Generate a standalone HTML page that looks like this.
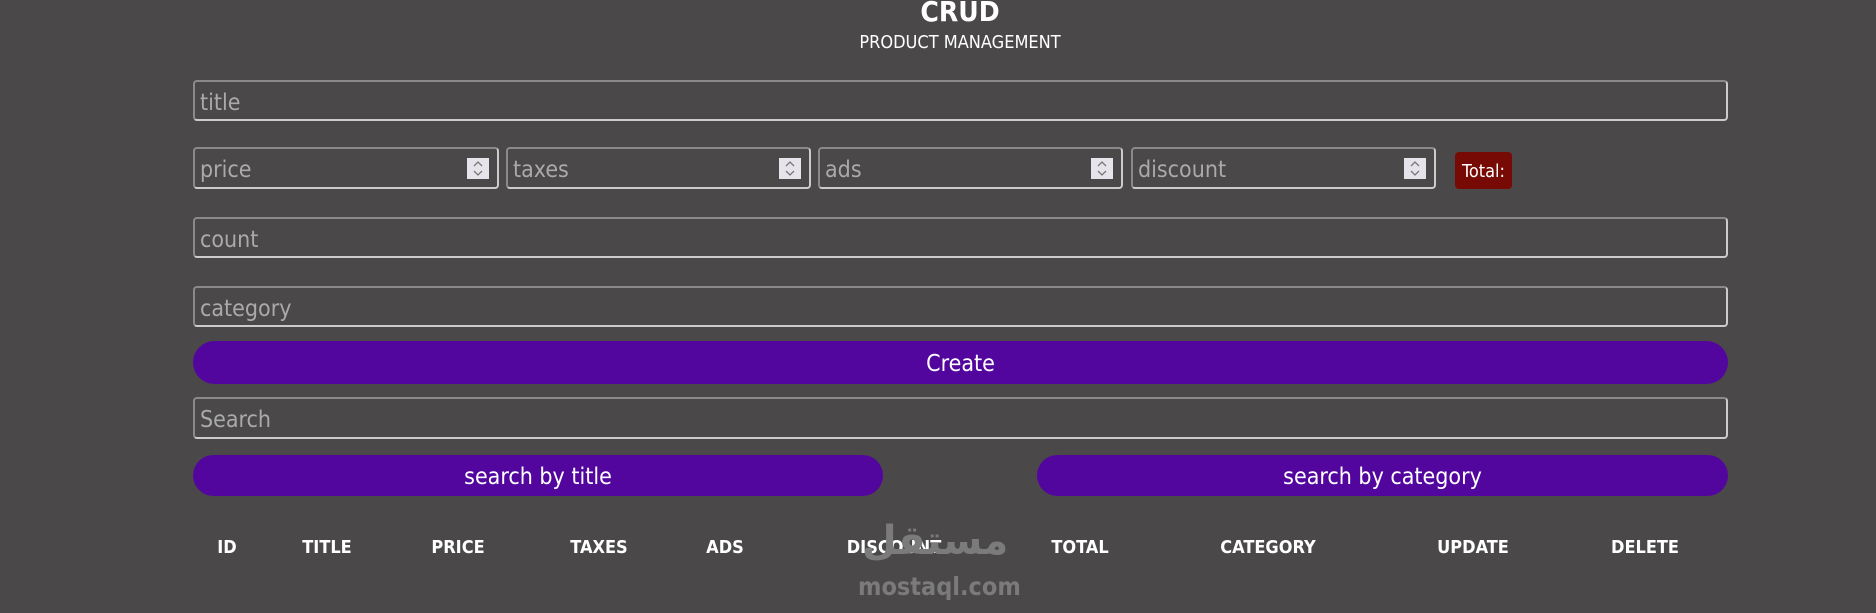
<!DOCTYPE html>
<html><head><style>
body{margin:0;width:1876px;height:613px;background:#4a4848;font-family:"DejaVu Sans Condensed","DejaVu Sans","Liberation Sans",sans-serif;color:#fff;position:relative;overflow:hidden}
.a{position:absolute}
.in{position:absolute;box-sizing:border-box;border:2px solid #ccc;border-top-color:#8a8a8a;border-left-color:#8a8a8a;border-radius:4px;color:#aaa;font-size:23px;padding-left:5px;padding-top:4px;display:flex;align-items:center}
.sp{position:absolute;right:8px;top:9px;width:22px;height:21px;background:#e6e4ea}
.btn{position:absolute;background:#52069e;border-radius:22px;display:flex;align-items:center;justify-content:center;font-size:23px;color:#fff;padding-top:2px;box-sizing:border-box}
.th{position:absolute;top:537px;font-weight:bold;font-size:18px;transform:translateX(-50%)}
</style></head><body>
<div class="a" style="left:0;width:1920px;text-align:center;top:-5px;font-weight:bold;font-size:28px">CRUD</div>
<div class="a" style="left:0;width:1920px;text-align:center;top:32px;font-size:18px">PRODUCT MANAGEMENT</div>
<div class="in" style="left:193px;top:80px;width:1535px;height:41px">title</div>
<div class="in" style="left:193px;top:147px;width:306px;height:42px">price<svg class="sp" viewBox="0 0 22 21"><path d="M7 8l4-4 4 4M7 13l4 4 4-4" fill="none" stroke="#777" stroke-width="1.3"/></svg></div>
<div class="in" style="left:506px;top:147px;width:305px;height:42px">taxes<svg class="sp" viewBox="0 0 22 21"><path d="M7 8l4-4 4 4M7 13l4 4 4-4" fill="none" stroke="#777" stroke-width="1.3"/></svg></div>
<div class="in" style="left:818px;top:147px;width:305px;height:42px">ads<svg class="sp" viewBox="0 0 22 21"><path d="M7 8l4-4 4 4M7 13l4 4 4-4" fill="none" stroke="#777" stroke-width="1.3"/></svg></div>
<div class="in" style="left:1131px;top:147px;width:305px;height:42px">discount<svg class="sp" viewBox="0 0 22 21"><path d="M7 8l4-4 4 4M7 13l4 4 4-4" fill="none" stroke="#777" stroke-width="1.3"/></svg></div>
<div class="a" style="left:1455px;top:152px;width:57px;height:37px;background:#780a05;border-radius:4px;font-size:18px;display:flex;align-items:center;justify-content:center;padding-top:2px;box-sizing:border-box">Total:</div>
<div class="in" style="left:193px;top:217px;width:1535px;height:41px">count</div>
<div class="in" style="left:193px;top:286px;width:1535px;height:41px">category</div>
<div class="btn" style="left:193px;top:341px;width:1535px;height:43px">Create</div>
<div class="in" style="left:193px;top:397px;width:1535px;height:42px">Search</div>
<div class="btn" style="left:193px;top:455px;width:690px;height:41px">search by title</div>
<div class="btn" style="left:1037px;top:455px;width:691px;height:41px">search by category</div>
<div class="th" style="left:227px">ID</div>
<div class="th" style="left:327px">TITLE</div>
<div class="th" style="left:458px">PRICE</div>
<div class="th" style="left:599px">TAXES</div>
<div class="th" style="left:725px">ADS</div>
<div class="th" style="left:894px">DISCOUNT</div>
<div class="th" style="left:1080px">TOTAL</div>
<div class="th" style="left:1268px">CATEGORY</div>
<div class="th" style="left:1473px">UPDATE</div>
<div class="th" style="left:1645px">DELETE</div>
<div class="a" style="left:858px;top:572px;font-size:25px;color:#7c7b7b;font-weight:bold">mostaql.com</div>
<div class="a" style="left:862px;top:518px;font-size:40px;color:#7c7b7b;font-weight:bold;font-family:'DejaVu Sans',sans-serif">مستقل</div>
</body></html>
